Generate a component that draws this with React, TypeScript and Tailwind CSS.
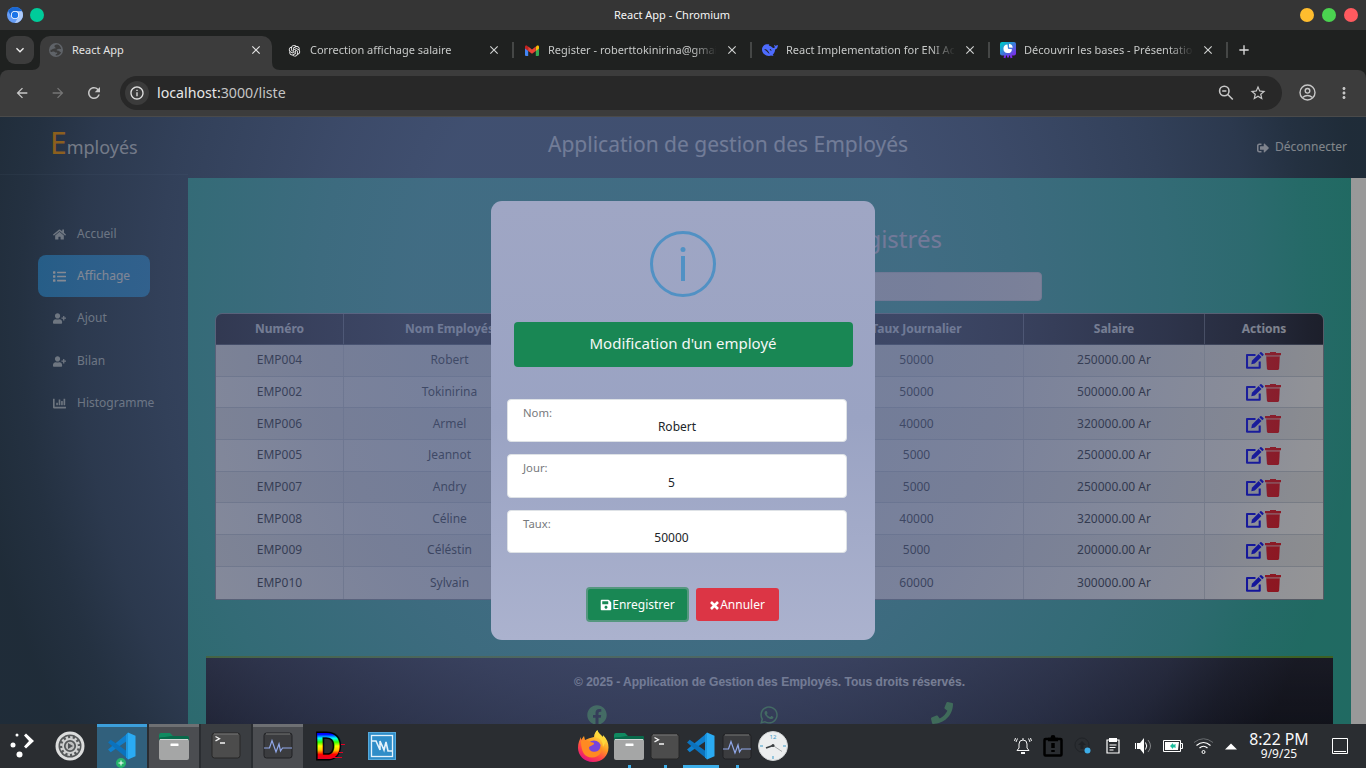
import React from "react";
import { FaHome, FaList, FaUserPlus, FaChartBar, FaSignOutAlt, FaSave, FaFacebook, FaWhatsapp, FaPhone } from "react-icons/fa";
import { MdArrowBack, MdArrowForward, MdRefresh, MdInfoOutline, MdStarBorder, MdMoreVert, MdClose, MdAdd, MdExpandMore } from "react-icons/md";
import { AiOutlineOpenAI } from "react-icons/ai";

const rows = [
  ["EMP004", "Robert", "50000", "250000.00 Ar"],
  ["EMP002", "Tokinirina", "50000", "500000.00 Ar"],
  ["EMP006", "Armel", "40000", "320000.00 Ar"],
  ["EMP005", "Jeannot", "5000", "250000.00 Ar"],
  ["EMP007", "Andry", "5000", "250000.00 Ar"],
  ["EMP008", "Céline", "40000", "320000.00 Ar"],
  ["EMP009", "Céléstin", "5000", "200000.00 Ar"],
  ["EMP010", "Sylvain", "60000", "300000.00 Ar"],
];

const GRID = "grid grid-cols-[128px_212px_254px_214px_181px_118px]";
const CELL = "flex items-center justify-center border-r border-[#d2d6dc] last:border-r-0";

function ChromiumLogo() {
  return (
    <svg width="16" height="16" viewBox="0 0 16 16">
      <circle cx="8" cy="8" r="8" fill="#669df6" />
      <path d="M8 0a8 8 0 0 1 7 4.2H8A4 4 0 0 0 4.6 10L1.1 4A8 8 0 0 1 8 0Z" fill="#1967d2" />
      <path d="M15 4.2A8 8 0 0 1 7.9 16l3.5-6A4 4 0 0 0 8 4.2Z" fill="#aecbfa" />
      <circle cx="8" cy="8" r="4" fill="#fff" />
      <circle cx="8" cy="8" r="3.2" fill="#1a73e8" />
    </svg>
  );
}

function Globe() {
  return (
    <svg width="14" height="14" viewBox="0 0 14 14">
      <circle cx="7" cy="7" r="7" fill="#5f6368" />
      <path d="M8.500 1.600C7 1.200 5.500 2 5.400 3.200c0 .9 1.300.900 1.200 1.700-.1.800-1.600.500-2.400.800-1 .4-1.200 1-2.700 1-.1 1 0 1.600.2 2.200 1.300-.1 1.800-.5 3-.5 1.300 0 1.100 1 2.100 1.100 1 .1 1.500-.1 1.500.7s-1.500.700-1.700 1.500c-.1.500.100.700.400.800 2.500.200 4.400-1.400 5.200-3.300-1.100.1-1.500-.9-2.400-1.400-.9-.4-2 .1-2.100-.8-.1-.8 1-.9 1.700-1.100.9-.2 1.300.300 2.700 0C11.700 3.700 10.300 2.100 8.500 1.600Z" fill="#3c3c3c" />
    </svg>
  );
}

function Gmail() {
  return (
    <svg width="14" height="11" viewBox="0 0 14 11">
      <path d="M0 2v8q0 1 1 1h2.200V4Z" fill="#4285f4" />
      <path d="M14 2v8q0 1-1 1h-2.200V4Z" fill="#34a853" />
      <path d="M0 1.800v1.600l3.200 2.500V2L2.400 1C1.400.2 0 .7 0 1.800Z" fill="#c5221f" />
      <path d="M14 1.800v1.600l-3.200 2.500V2l.8-1C12.600.2 14 .7 14 1.800Z" fill="#fbbc04" />
      <path d="M3.200 1.600 7 4.600l3.800-3v4.300L7 8.800 3.200 5.900Z" fill="#ea4335" />
    </svg>
  );
}

function Whale() {
  return (
    <svg width="16" height="12" viewBox="0 0 16 12">
      <path d="M15.900 1c-.7.300-1 .500-1.700.600-.9.100-1.300 0-2.100-.9-.3.900.2 1.800.9 2.300-.4 1-1.300 1.300-1.900.9C9.700 2.900 8.600 2 7.300 1.700c-.7-.2-.5-.7.2-1.100C3.500-.4 0 1.700 0 5.600 0 9.300 3.200 12 7 12c1 0 1.500-.2 2.100-.500.8.4 1.900.3 2.600.1-.3-.4-.8-.500-1-.900 1.300-1.300 2.300-2.900 2.400-5.300 1.600 0 2.900-2 2.800-4.400ZM7.600 9.900C5.800 8.800 4.600 6.500 2.300 5.700c.6-.8 2.200-.2 3.200.8.900.9 1.500 2.100 2.100 3.400ZM7.700 5.400c.6-.8 1.700.2 1.800 1.600-.7-.1-1.300-.700-1.800-1.600Z" fill="#4d6bfe" />
    </svg>
  );
}

function Deck() {
  return (
    <svg width="16" height="17" viewBox="0 0 16 17">
      <defs><linearGradient id="deck" x1="0" y1="0" x2="1" y2="1"><stop offset=".1" stopColor="#00c4cc" /><stop offset=".95" stopColor="#7d2ae8" /></linearGradient></defs>
      <path d="M5.500 12 4.500 16M10.500 12l1 4M8 12v3.500" stroke="#7d2ae8" strokeWidth="2" />
      <rect width="16" height="13.500" rx="2" fill="url(#deck)" />
      <path d="M7.500 2.500A4.300 4.300 0 1 0 12 7.200L8 6.800Z" fill="#fff" />
      <path d="M9 1.800a4.300 4.300 0 0 1 3.700 4L9 5.500Z" fill="#fff" />
    </svg>
  );
}

function EditIcon() {
  return (
    <svg width="18" height="17" viewBox="0 0 18 17">
      <path d="M9.500 3H1v12.700h12.700V9.500" fill="none" stroke="#1212ff" strokeWidth="2.100" strokeLinejoin="round" />
      <path d="M5.300 12.200 5.900 8.700 12.600 2l2.900 2.900-6.700 6.700Z" fill="#1212ff" />
      <path d="m13.300 1.300 1-1q.6-.5 1.200 0l1.900 1.800q.5.6 0 1.200l-1.100 1Z" fill="#1212ff" />
    </svg>
  );
}

function TrashIcon() {
  return (
    <svg width="16" height="18" viewBox="0 0 16 18">
      <path d="M5 0h6v1h5v2.300H0V1h5Z" fill="#f01c28" />
      <path d="M1.200 3.300h13.600v1.300H1.200Z" fill="#f01c28" opacity=".55" />
      <path d="M1.200 4.600h13.600l-.7 12q-.1 1.400-1.300 1.400H3.200q-1.200 0-1.300-1.400Z" fill="#f01c28" />
    </svg>
  );
}

function Tab({ icon, title }: { icon: React.ReactNode; title: string }) {
  return (
    <div className="flex h-[30px] w-[238px] items-center pl-[10px]">
      <div className="flex w-4 shrink-0 items-center justify-center">{icon}</div>
      <div className="ml-2 w-[168px] overflow-hidden whitespace-nowrap text-[11px] text-[#c7c9c8] [mask-image:linear-gradient(to_right,black_86%,transparent_101%)]">{title}</div>
      <MdClose className="ml-[9px] size-[14px] shrink-0 text-[#d0d2d1]" />
      <div className="ml-auto h-4 w-[2px] bg-[#454746]" />
    </div>
  );
}

function NavItem({ icon, label, active }: { icon: React.ReactNode; label: string; active?: boolean }) {
  return (
    <div className={active ? "flex h-[42px] w-[112px] items-center gap-[11px] rounded-[8px] bg-[#3498db] pl-[15px] text-[#eceff1]" : "flex h-[42px] w-[112px] items-center gap-[11px] pl-[15px] text-[#bdc8cc]"}>
      <span className="mt-px w-[13px] shrink-0 text-[13px]">{icon}</span>
      <span>{label}</span>
    </div>
  );
}

function Field({ label, value, cls, valueCls }: { label: string; value: string; cls: string; valueCls: string }) {
  return (
    <div className={"w-[340px] rounded-[4px] border border-[#dee2e6] bg-white " + cls}>
      <div className="pl-[15px] pt-[5px] text-[11.300px] leading-4 text-[#77797c]">{label}</div>
      <div className={"text-center text-[12px] leading-4 text-[#212529] " + valueCls}>{value}</div>
    </div>
  );
}

function VsCode() {
  return (
    <svg width="28" height="28" viewBox="0 0 28 28">
      <path d="M20 1 0 17.500l2.700 2.800L20 8.200Z" fill="#0f7fce" />
      <path d="M20 27 0 10.500l2.700-2.800L20 20Z" fill="#0b72bd" />
      <path d="m20 .5 7.500 3.200v20.600L20 27.500Z" fill="#2aabf3" />
      <path d="m20 .5-2 2v23l2 2Z" fill="#1b96e0" />
    </svg>
  );
}

function Folder() {
  return (
    <svg width="32" height="29" viewBox="0 0 32 29">
      <path d="M1 3q0-2 2-2h9l3 3h14q2 0 2 2v10H1Z" fill="#108a60" />
      <path d="M1 6q1-1 6-1l6-1h16q2 0 2 2v5H1Z" fill="#08694a" />
      <rect x="1" y="7" width="30" height="21" rx="2" fill="#a5a6a6" />
      <path d="M2 7.500h28" stroke="#d4d6d6" />
      <rect x="12.500" y="11.500" width="8" height="2.500" rx=".5" fill="#fff" />
    </svg>
  );
}

function Terminal() {
  return (
    <svg width="30" height="27" viewBox="0 0 30 27">
      <rect x="1" y="1" width="28" height="25" rx="2.500" fill="#4c4c4c" stroke="#262626" />
      <path d="M3 2h24" stroke="#777" />
      <path d="m4.500 4.500 4 2.200-4 2.200M9 11h5" fill="none" stroke="#f3f3f3" strokeWidth="1.300" />
    </svg>
  );
}

function Monitor() {
  return (
    <svg width="30" height="27" viewBox="0 0 30 27">
      <rect x="1" y="1" width="28" height="25" rx="2.500" fill="#3b3c3f" stroke="#202124" />
      <path d="M3 2h24" stroke="#777" />
      <path d="M1 16h5.500l2.500-7.500 4 11.500 3-8 1.500 7 2-3H29" fill="none" stroke="#91a8ea" strokeWidth="1.200" />
    </svg>
  );
}

function Gear() {
  return (
    <svg width="30" height="30" viewBox="0 0 30 30">
      <circle cx="15" cy="15" r="14.500" fill="#dcdddd" />
      <circle cx="15" cy="15" r="11.500" fill="#55585a" />
      <circle cx="15" cy="15" r="8.700" fill="none" stroke="#d0d1d1" strokeWidth="2.500" strokeDasharray="2.400 2.150" />
      <circle cx="15" cy="15" r="7" fill="none" stroke="#d0d1d1" strokeWidth="1.800" />
      <circle cx="15" cy="15" r="4.300" fill="#bfc0c0" />
      <path d="m13 12 5 3-5 3Z" fill="#505356" />
    </svg>
  );
}

function Firefox() {
  return (
    <svg width="32" height="32" viewBox="0 0 32 32">
      <defs><linearGradient id="fox" x1=".8" y1=".1" x2=".3" y2="1"><stop stopColor="#fff14d" /><stop offset=".4" stopColor="#ff9a22" /><stop offset=".7" stopColor="#ff4548" /><stop offset="1" stopColor="#e3127d" /></linearGradient></defs>
      <path d="M17 7c0-3 2-6 3.500-7 .5 3 3 5 5 7 1-.2.500-1.500.500-2 4 4 5.500 8 5.500 12.500C31.500 26 25 32 16 32S1 25 1 18C1 13 2.500 10 4 7v3l3-4 1 4q4-2 9-3Z" fill="url(#fox)" />
      <circle cx="17" cy="17.500" r="7" fill="#7744dc" />
      <path d="M4 11c5-2 7 0 9 1 2 .7 4 .3 4 1.500 0 2-4 2-5 4 0 3 3 5 7 4 3-.8 5-3 4-7 4 6 0 13-8 13S4 21 4 11Z" fill="#ff8a22" />
      <path d="M18 7q8 1 8 10l3-6-4-5-5-5Z" fill="#ffd83a" />
    </svg>
  );
}

function Clock() {
  return (
    <svg width="30" height="30" viewBox="0 0 30 30">
      <circle cx="15" cy="15" r="14.500" fill="#eceeef" stroke="#cfd2d3" />
      <path d="m15 14.500-7 2.500" stroke="#3b3f42" strokeWidth="1.800" /><path d="m15 14.500 9 6" stroke="#a8acad" />
      <path d="M2 15h3M25 15h3M15 25v3" stroke="#3c9cc9" />
      <circle cx="15" cy="14.500" r="1.500" fill="#3b3f42" />
      <text x="15" y="7.500" textAnchor="middle" fontSize="6" fontFamily="Noto Sans" fill="#3c9cc9">12</text>
    </svg>
  );
}

function Launcher() {
  return (
    <svg width="26" height="28" viewBox="0 0 26 28" fill="#fff">
      <circle cx="8" cy="3" r="1.500" /><circle cx="4" cy="13" r="2.500" /><circle cx="10.500" cy="22.500" r="3" />
      <path d="m15 3.500 2-2L25 9l-8 7.500-2-2L20 9Z" />
    </svg>
  );
}

function Taskbar() {
  const slot = "flex h-11 w-[50px] items-center justify-center border-t-[3px]";
  return (
    <div className="flex h-11 w-full shrink-0 bg-[#2a2d31]">
      <div className="flex w-[43px] items-center justify-center"><Launcher /></div>
      <div className="flex w-[54px] items-center justify-center"><Gear /></div>
      <div className="flex gap-[2px]">
        <div className={slot + " relative border-[#3c9fdb] bg-[#31607c] pb-[3px]"}><VsCode />
          <svg className="absolute bottom-0 left-[19px]" width="10" height="10" viewBox="0 0 10 10"><circle cx="5" cy="5" r="5" fill="#26b36b" /><path d="M2.500 5h5M5 2.500v5" stroke="#fff" /></svg>
        </div>
        <div className={slot + " border-[#6e7073] bg-[#4b4d51] pb-[3px]"}><Folder /></div>
        <div className={slot + " border-[#3a3d41] bg-[#3a3d41] pb-1"}><Terminal /></div>
        <div className={slot + " border-[#6e7073] bg-[#4b4d51] pb-1"}><Monitor /></div>
      </div>
      <div className="flex w-[54px] items-center justify-center pl-[2px]">
        <svg width="30" height="32" viewBox="0 0 30 32">
          <defs><linearGradient id="rainbow" x1="0" y1="2" x2="0" y2="30" gradientUnits="userSpaceOnUse"><stop offset=".08" stopColor="#00f" /><stop offset=".22" stopColor="#0ff" /><stop offset=".36" stopColor="#3f0" /><stop offset=".5" stopColor="#ff0" /><stop offset=".64" stopColor="#fc0" /><stop offset=".8" stopColor="#f00" /><stop offset="1" stopColor="#e00030" /></linearGradient></defs>
          <text x="-1" y="28.500" fontSize="36" fontWeight="900" fontFamily="Liberation Sans" fill="url(#rainbow)" stroke="#000" strokeWidth="3" paintOrder="stroke">D</text>
          <path d="M25 14.500h4M23 22.500h4M17 27.500h9" stroke="#e00024" />
        </svg>
      </div>
      <div className="flex w-[50px] items-center justify-center">
        <svg width="28" height="28" viewBox="0 0 28 28"><rect x=".5" y=".5" width="27" height="27" fill="#2f8dc8" stroke="#56a9da" /><rect x="3.500" y="3.500" width="21" height="21" fill="none" stroke="#e4f2fb" strokeWidth="1.300" /><path d="M4 9h4l4 9V9l4 9 2-8 2 9h4" fill="none" stroke="#e4f2fb" strokeWidth="1.600" /></svg>
      </div>
      <div className="ml-[168px] flex w-[216px]">
        {[<Firefox />, <Folder />, <Terminal />, <VsCode />, <Monitor />, <Clock />].map((icon, i) => (
          <div key={i} className="flex h-11 w-9 flex-col items-center justify-between pt-[6px]">
            <div className="flex h-8 items-center">{icon}</div>
            <div className={i === 3 ? "h-[3px] w-9 bg-[#3daee9]" : i === 0 || i === 5 ? "h-[3px]" : "h-[3px] w-[3px] bg-[#3daee9]"} />
          </div>
        ))}
      </div>
      <div className="ml-auto flex items-center">
        <div className="mr-[-3px] flex w-[240px] items-center">
          {[
            <svg width="18" height="18" viewBox="0 0 18 18" fill="none" stroke="#f4f5f5"><path d="M3 13.500 5 11V7q0-4 4-4t4 4v4l2 2.500ZM9 1v2M3.500 1.500 2 5M1.500 1 .5 4M14.500 1.500 16 5M16.500 1l1 3" /><path d="M7 16h4" strokeWidth="2" /></svg>,
            <svg width="20" height="22" viewBox="0 0 20 22" fill="none" stroke="#000" strokeWidth="2.500"><rect x="1.500" y="4" width="17" height="16.500" rx="1" /><path d="M5 4.500h10M10 8v5M10 15v2" strokeWidth="3.500" /><circle cx="10" cy="2.500" r="1.200" /></svg>,
            <svg width="18" height="18" viewBox="0 0 18 18"><circle cx="8" cy="8" r="7" fill="none" stroke="#202327" /><path d="M8 4 4 8h2.500v4h3V8H12Z" fill="#1f2226" /><circle cx="13.500" cy="13.500" r="3" fill="#3daee9" /></svg>,
            <svg width="14" height="16" viewBox="0 0 14 16" fill="none" stroke="#fff" strokeWidth="1.200"><path d="M1 2h12v13H1Z" /><path d="M3 0h8v4H3Z" fill="#fff" stroke="none" /><path d="M3.500 7h7M3.500 9.500h6M3.500 12h4" /></svg>,
            <svg width="17" height="16" viewBox="0 0 17 16"><path d="M1 5v6H0V5ZM2 5h3l4-5v16l-4-5H2Z" fill="#fff" /><path d="M10.500 4.500q2.500 3.500 0 7" fill="none" stroke="#fff" /><path d="M13 2q5 6 0 12" fill="none" stroke="#85878a" /></svg>,
            <svg width="20" height="12" viewBox="0 0 20 12"><path d="M.5.500h17v11H.5ZM18 3.500h1.500v5H18" fill="none" stroke="#fff" /><path d="M2 2h14l-1 8H2Z" fill="#fff" /><path d="m7 6 3-3v1.500h3v1h-1v1h1v1h-3V9Z" fill="#1abc9c" /></svg>,
            <svg width="21" height="16" viewBox="0 0 21 16" fill="none"><path d="M1 4.500Q10.500-3 20 4.500" stroke="#686b6e" /><path d="M3.500 7.500q7-6 14 0M6.500 10q4-3.500 8 0" stroke="#fff" strokeWidth="1.200" /><circle cx="10.500" cy="14" r="1.500" stroke="#fff" /></svg>,
            <svg width="12" height="7" viewBox="0 0 12 7"><path d="m6 .5 6 6H0Z" fill="#fff" /></svg>,
          ].map((icon, i) => <div key={i} className={i === 7 ? "flex w-[26px] items-center justify-center" : "flex w-[30px] items-center justify-center"}>{icon}</div>)}
        </div>
        <div className="flex w-[68px] flex-col items-center text-[#fafafa]">
          <div className="whitespace-nowrap text-[15.800px] leading-[17px]">8:22 PM</div>
          <div className="-mt-px text-[12px] leading-[14px]">9/9/25</div>
        </div>
        <svg className="ml-[19px] mr-[18px]" width="16" height="16" viewBox="0 0 16 16" fill="none" stroke="#fff"><path d="M.5.500h15v15H.5ZM2 13.500h12" /></svg>
      </div>
    </div>
  );
}

export default function App() {
  return (
    <div className="flex h-[768px] w-[1366px] flex-col overflow-hidden bg-[#1f2120] font-['Noto_Sans',sans-serif] text-[12px]">
      <div className="flex h-[30px] shrink-0 items-center bg-[#353535] pl-[7px] pr-2">
        <div className="flex w-[607px] items-center gap-[7px]"><ChromiumLogo /><div className="size-[14px] rounded-full bg-[#00cc9a]" /></div>
        <div className="text-[11px] text-[#f5f5f5]">React App - Chromium</div>
        <div className="ml-auto flex gap-2"><div className="size-[14px] rounded-full bg-[#ffbd2e]" /><div className="size-[14px] rounded-full bg-[#4bd350]" /><div className="size-[14px] rounded-full bg-[#ff5a5f]" /></div>
      </div>

      <div className="flex h-10 shrink-0 items-start bg-[#1f2120] pl-[6px] pt-[6px]">
        <div className="flex size-7 items-center justify-center rounded-[9px] bg-[#3c3c3c] text-[#eeeeee]"><MdExpandMore className="size-4" /></div>
        <div className="relative ml-[6px] flex h-[34px] w-[232px] items-start rounded-t-[10px] bg-[#3c3c3c] pt-[2px]">
          <svg className="absolute -left-[8px] bottom-0" width="8" height="8"><path d="M8 0v8H0q8 0 8-8Z" fill="#3c3c3c" /></svg>
          <svg className="absolute -right-[8px] bottom-0" width="8" height="8"><path d="M0 0v8h8q-8 0-8-8Z" fill="#3c3c3c" /></svg>
          <div className="flex h-6 w-full items-center pl-[9px] pr-[9px] text-[11px] text-[#e3e3e3]"><Globe /><span className="ml-[9px] flex-1">React App</span><MdClose className="size-[14px]" /></div>
        </div>
        <div className="-mt-px ml-1 flex">
          <Tab icon={<AiOutlineOpenAI className="size-[15px] text-[#eee]" />} title="Correction affichage salaire" />
          <Tab icon={<Gmail />} title="Register - roberttokinirina@gmail.com" />
          <Tab icon={<Whale />} title="React Implementation for ENI Academy" />
          <Tab icon={<Deck />} title="Découvrir les bases - Présentation" />
        </div>
        <MdAdd className="ml-2 mt-[6px] size-4 text-[#dddddd]" />
      </div>

      <div className="h-[47px] shrink-0 bg-[#1f2120]">
        <div className="flex h-[47px] items-center rounded-t-[8px] border-b border-[#4a4a4a] bg-[#3c3c3c] pb-px pl-[14px] text-[#c7c7c7]">
          <MdArrowBack className="size-4" /><MdArrowForward className="ml-5 size-4 text-[#757575]" /><MdRefresh className="ml-[19px] size-[18px]" />
          <div className="ml-[17px] flex h-[34px] w-[1162px] items-center rounded-full bg-[#282828] pl-[5px] pr-[15px]">
            <div className="flex size-6 items-center justify-center rounded-full bg-[#3b3b3b]"><MdInfoOutline className="size-[16px] text-[#e0e0e0]" /></div>
            <div className="ml-2 text-[14.200px] text-[#e6e6e6]">localhost:<span className="text-[#c5c5c5]">3000/liste</span></div>
            <svg className="ml-auto" width="16" height="16" viewBox="0 0 16 16" fill="none" stroke="#c7c7c7" strokeWidth="1.600"><circle cx="6.300" cy="6" r="4.700" /><path d="m9.800 9.500 5 5M4.200 6h4.200" /></svg>
            <MdStarBorder className="ml-[15px] size-[18px]" />
          </div>
          <svg className="ml-[17px]" width="17" height="17" viewBox="0 0 17 17" fill="none" stroke="#c7c7c7" strokeWidth="1.400"><circle cx="8.500" cy="8.500" r="7.500" /><circle cx="8.500" cy="6.800" r="2.300" /><path d="M3.500 13.500q5-4 10 0" /></svg>
          <MdMoreVert className="ml-[19px] size-[18px]" />
        </div>
      </div>

      <div className="relative flex h-[607px] shrink-0 overflow-hidden bg-[#34495e]">
        <div className="w-[188px] shrink-0">
          <div className="flex h-[58px] items-baseline border-b border-[#3e546a] pl-[50px] pt-[4px] text-[#ccd2d6]">
            <span className="text-[30px] leading-[44px] text-[#f39c12]">E</span><span className="text-[18px]">mployés</span>
          </div>
          <div className="flex flex-col pl-[38px] pt-[38px]">
            <NavItem icon={<FaHome />} label="Accueil" />
            <NavItem icon={<FaList />} label="Affichage" active />
            <NavItem icon={<FaUserPlus />} label="Ajout" />
            <div className="h-px" />
            <NavItem icon={<FaUserPlus />} label="Bilan" />
            <NavItem icon={<FaChartBar />} label="Histogramme" />
          </div>
        </div>
        <div className="flex min-w-0 flex-1 flex-col">
          <div className="flex h-[61px] shrink-0 items-center">
            <div className="ml-[360px] mt-[-6px] whitespace-nowrap text-[21px] text-[#e4e8ec]">Application de gestion des Employés</div>
            <div className="ml-auto mr-[19px] mt-[-2px] flex items-center gap-[6px] text-[#dce0e4]"><FaSignOutAlt className="mt-[2px] size-3" />Déconnecter</div>
          </div>
          <div className="flex min-h-0 flex-1">
            <div className="flex w-[1163px] flex-col bg-[#36b0a3]">
              <div className="h-[94px] shrink-0 pr-[409px] pt-[44px] text-right text-[24px] leading-[34px] text-[#eadff0]">Enregistrés</div>
              <div className="ml-[309px] h-[29px] w-[545px] shrink-0 rounded-[4px] border border-[#dfdce4] bg-[#f6f2f6]" />
              <div className="ml-[27px] mt-[12px] w-[1109px] shrink-0 overflow-hidden rounded-t-[7px] border border-[#8f96a4]">
                <div className={GRID + " h-[31px] border-b border-[#565d70] bg-[#292c3b] text-[12px] font-bold text-[#dfe1e8]"}>
                  {["Numéro", "Nom Employés", "", "Taux Journalier", "Salaire", "Actions"].map((h, i) => <div key={i} className="flex items-center justify-center border-r border-[#6c7284] last:border-r-0">{h}</div>)}
                </div>
                {rows.map((r, i) => (
                  <div key={r[0]} className={GRID + " h-[31.700px] border-b border-[#cbd1da] text-[#30333a] last:border-b-0 " + (i % 2 ? "bg-[#f8f8fa]" : "bg-[#ebecee]")}>
                    <div className={CELL}>{r[0]}</div><div className={CELL}>{r[1]}</div><div className={CELL} /><div className={CELL}>{r[2]}</div><div className={CELL}>{r[3]}</div>
                    <div className={CELL + " gap-px pr-[2px] pt-px"}><EditIcon /><TrashIcon /></div>
                  </div>
                ))}
              </div>
              <div className="ml-[18px] mt-[56px] flex w-[1127px] flex-1 flex-col items-center border-t-2 border-[#66a03a] bg-linear-to-b from-[#292b3c] to-[#1c1e2c] pt-[15px]">
                <div className="whitespace-nowrap font-['Liberation_Sans'] text-[12px] font-bold text-[#e2e3e9]">© 2025 - Application de Gestion des Employés. Tous droits réservés.</div>
                <div className="mt-[11px] flex h-6 w-[366px] shrink-0 items-center justify-between text-[#4caf50]"><FaFacebook className="mt-[2px] size-[20px]" /><FaWhatsapp className="mt-[2px] size-[20px]" /><FaPhone className="-mt-px size-[22px]" /></div>
              </div>
            </div>
            <div className="w-[15px] bg-white" />
          </div>
        </div>

        <div className="absolute inset-0 flex justify-center bg-[radial-gradient(700px_820px_at_665px_193px,rgba(69,82,119,0.72)_0%,rgba(69,82,119,0.72)_36%,rgba(64,75,110,0.682)_50%,rgba(49,58,86,0.586)_72%,rgba(36,42,63,0.522)_84%,rgba(16,19,29,0.448)_92%,rgba(0,0,0,0.4)_100%)]">
          <div className="mt-[84px] flex h-[439px] w-[384px] flex-col rounded-[11px] bg-linear-to-b from-[#9fa6c4] via-[#9aa3c3] to-[#abb2ce] px-4 pt-[30px]">
            <svg className="mx-auto shrink-0" width="66" height="66" viewBox="0 0 66 66"><circle cx="33" cy="33" r="31.500" fill="none" stroke="#5191c4" strokeWidth="3" /><circle cx="33" cy="18.500" r="2.500" fill="#5191c4" /><rect x="31" y="25" width="4" height="25" fill="#5191c4" /></svg>
            <div className="ml-[7px] mt-[25px] flex h-[45px] w-[339px] shrink-0 items-center justify-center rounded-[4px] bg-[#198754] pb-[3px] pr-px text-[15px] text-[#f4f8f6]">Modification d'un employé</div>
            <Field label="Nom:" value="Robert" cls="mt-[32px] h-[43px]" valueCls="-mt-[2px]" />
            <Field label="Jour:" value="5" cls="mt-[12px] h-[44px] pr-[11px]" valueCls="-mt-px" />
            <Field label="Taux:" value="50000" cls="mt-[12px] h-[43px] pr-[11px]" valueCls="-mt-[2px]" />
            <div className="ml-[79px] mt-[34px] flex h-[35px] gap-[7px] text-[12px] text-white">
              <div className="flex w-[103px] items-center justify-center rounded-[4px] border-2 border-[#55977f] bg-[#198754]"><FaSave className="mt-px size-3" />Enregistrer</div>
              <div className="my-px flex w-[83px] items-center justify-center rounded-[3px] bg-[#dc3545]">
                <svg className="mr-[1px] mt-px" width="9" height="9" viewBox="0 0 9 9"><path d="m1 1 7 7M8 1 1 8" stroke="#fff" strokeWidth="2.600" /></svg>Annuler
              </div>
            </div>
          </div>
        </div>
      </div>
      <Taskbar />
    </div>
  );
}
